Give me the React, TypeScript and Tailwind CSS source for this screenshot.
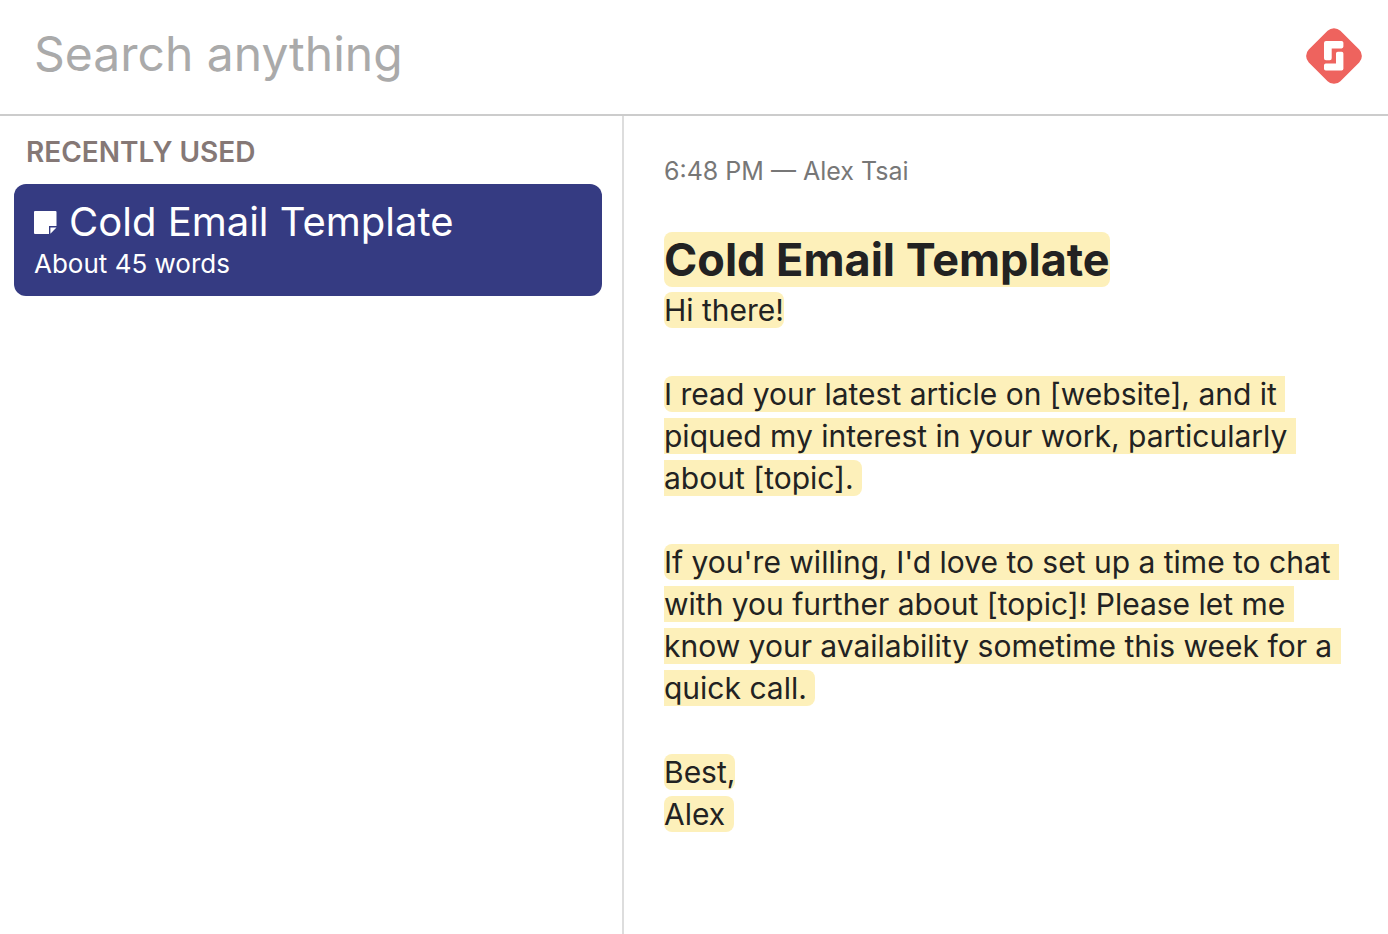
import { clsx } from 'clsx'

interface Snippet {
  id: string
  title: string
  summary: string
  meta: string
  /** Empty strings are blank lines */
  lines: string[]
}

const SNIPPETS: Snippet[] = [
  {
    id: 'cold-email',
    title: 'Cold Email Template',
    summary: 'About 45 words',
    meta: '6:48 PM — Alex Tsai',
    lines: [
      'Hi there!',
      '',
      'I read your latest article on [website], and it piqued my interest in your work, particularly about [topic]. ',
      '',
      "If you're willing, I'd love to set up a time to chat with you further about [topic]! Please let me know your availability sometime this week for a quick call. ",
      '',
      'Best,',
      'Alex ',
    ],
  },
]

function Logo() {
  return (
    <svg viewBox="0 0 56 56" className="mt-1 size-14 shrink-0" aria-hidden="true">
      <path
        d="M21.6 2.8a9 9 0 0 1 12.8 0L53.2 21.6a9 9 0 0 1 0 12.8L34.4 53.2a9 9 0 0 1-12.8 0L2.8 34.4a9 9 0 0 1 0-12.8Z"
        fill="#ee635e"
      />
      <path
        d="M20 13H35.6a1.8 1.8 0 0 1 1.8 1.8V18.6a1.8 1.8 0 0 1-1.8 1.8H25.7V30.2a2 2 0 0 1-2 2H20a2 2 0 0 1-2-2V15a2 2 0 0 1 2-2Z"
        fill="#fff"
      />
      <path
        d="M31.8 23.8H35.6a1.8 1.8 0 0 1 1.8 1.8V40.8a1.8 1.8 0 0 1-1.8 1.8H19.8a1.8 1.8 0 0 1-1.8-1.8V37.2a1.8 1.8 0 0 1 1.8-1.8H30V25.6a1.8 1.8 0 0 1 1.8-1.8Z"
        fill="#fff"
      />
    </svg>
  )
}

function NoteIcon() {
  return (
    <svg viewBox="0 0 23 23" className="size-[23px] shrink-0" fill="currentColor" aria-hidden="true">
      <path d="M1 0H21.5a1 1 0 0 1 1 1V15H15V23H1a1 1 0 0 1-1-1V1a1 1 0 0 1 1-1Z" />
      <path d="M16.4 16.4H22.5L16.4 22.8Z" />
    </svg>
  )
}

function SnippetItem({ snippet, selected }: { snippet: Snippet; selected: boolean }) {
  return (
    <button
      type="button"
      className={clsx(
        'block w-full rounded-xl px-5 pt-3 pb-4 text-left',
        selected && 'bg-[#353b82] text-white'
      )}
    >
      <span className="flex items-center gap-3 text-[40px] leading-[52px]">
        <NoteIcon />
        {snippet.title}
      </span>
      <span className="block text-[26px] leading-8">{snippet.summary}</span>
    </button>
  )
}

function Preview({ snippet }: { snippet: Snippet }) {
  return (
    <article className="min-w-0 flex-1 px-10 pt-9 pb-10 text-[#222]">
      <p className="mb-10 text-[25px] leading-[38px] text-[#777]">{snippet.meta}</p>
      <h1 className="text-[45px] leading-[59px] font-bold">
        <mark className="rounded-lg bg-[#fdf0ba] text-inherit">{snippet.title}</mark>
      </h1>
      {snippet.lines.map((line, index) => (
        <p key={index} className="min-h-[42px] text-[30px] leading-[42px] whitespace-pre-wrap">
          {line && <mark className="rounded-lg bg-[#fdf0ba] text-inherit">{line}</mark>}
        </p>
      ))}
    </article>
  )
}

export default function App() {
  const selected = SNIPPETS[0]

  return (
    <div className="flex min-h-screen flex-col bg-white font-['Inter',sans-serif]">
      {/* Search bar */}
      <header className="flex items-start gap-6 border-b-2 border-[#ccc] pt-6 pr-[26px] pb-[30px] pl-[34px]">
        <input
          type="search"
          aria-label="Search anything"
          placeholder="Search anything"
          className="h-15 min-w-0 flex-1 text-[48px] outline-none placeholder:text-[#aaa]"
        />
        <Logo />
      </header>

      <main className="flex flex-1">
        {/* Results */}
        <section className="w-[624px] shrink-0 border-r-2 border-[#ddd] pt-4 pr-5 pl-[14px]">
          <h2 className="mb-3 px-3 text-[28px] leading-10 font-semibold text-[#857876] uppercase">
            Recently used
          </h2>
          {SNIPPETS.map((snippet) => (
            <SnippetItem
              key={snippet.id}
              snippet={snippet}
              selected={snippet.id === selected.id}
            />
          ))}
        </section>

        <Preview snippet={selected} />
      </main>
    </div>
  )
}
